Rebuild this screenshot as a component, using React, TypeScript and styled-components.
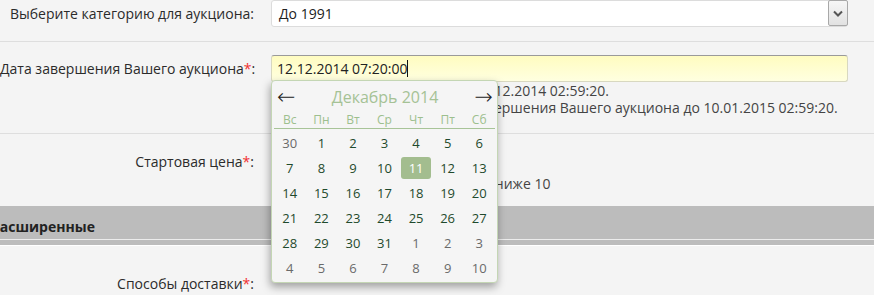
import styled, { createGlobalStyle } from "styled-components";

const GlobalStyle = createGlobalStyle`
  html, body {
    margin: 0;
    padding: 0;
    background: #f4f4f4;
    overflow: hidden;
  }
  body {
    font-family: "Open Sans", "Noto Sans", sans-serif;
    font-size: 14px;
    color: #2b2b2b;
  }
`;

const weekDays = ["Вс", "Пн", "Вт", "Ср", "Чт", "Пт", "Сб"];

const days = [
  [30, 1, 2, 3, 4, 5, 6],
  [7, 8, 9, 10, 11, 12, 13],
  [14, 15, 16, 17, 18, 19, 20],
  [21, 22, 23, 24, 25, 26, 27],
  [28, 29, 30, 31, 1, 2, 3],
  [4, 5, 6, 7, 8, 9, 10],
];

const isOther = (row: number, d: number) =>
  (row === 0 && d > 20) || (row >= 4 && d < 15);

const App = () => {
  return (
    <Page>
      <GlobalStyle />
      <Row $pad={0} $height={42}>
        <Label>Выберите категорию для аукциона:</Label>
        <Field>
          <Select>
            <span>До 1991</span>
            <SelectButton>
              <svg width="10" height="7" viewBox="0 0 10 7">
                <path d="M1 1.5 L5 5.5 L9 1.5" fill="none" stroke="#555" strokeWidth="2" />
              </svg>
            </SelectButton>
          </Select>
        </Field>
      </Row>

      <Row $pad={13} $height={92}>
        <Label>
          Дата завершения Вашего аукциона<Req>*</Req>:
        </Label>
        <Field>
          <TextInput $focused>
            12.12.2014 07:20:00<Caret />
          </TextInput>
          <Hint>Минимальная дата аукциона 13.12.2014 02:59:20.</Hint>
          <Hint>Вы сможете продлить время завершения Вашего аукциона до 10.01.2015 02:59:20.</Hint>
          <Calendar>
            <CalHeader>
              <Arrow>←</Arrow>
              <MonthTitle>Декабрь 2014</MonthTitle>
              <Arrow>→</Arrow>
            </CalHeader>
            <WeekRow>
              {weekDays.map((w) => (
                <WeekDay key={w}>{w}</WeekDay>
              ))}
            </WeekRow>
            <DaysGrid>
              {days.map((row, ri) =>
                row.map((d, ci) => (
                  <Day
                    key={ri + "-" + ci}
                    $other={isOther(ri, d)}
                    $selected={ri === 1 && d === 11}
                  >
                    {d}
                  </Day>
                ))
              )}
            </DaysGrid>
          </Calendar>
        </Field>
      </Row>

      <Row $pad={14} $height={72} $last>
        <Label>
          Стартовая цена<Req>*</Req>:
        </Label>
        <Field>
          <TextInput $width={120}>10</TextInput>
          <Hint>Стартовая цена должна быть не ниже 10</Hint>
        </Field>
      </Row>

      <SectionBar>
        <span>Расширенные</span>
      </SectionBar>

      <Row $pad={24} $height={60} $last>
        <Label>
          Способы доставки<Req>*</Req>:
        </Label>
        <Field />
      </Row>
    </Page>
  );
};

const Page = styled.div`
  width: 874px;
  height: 295px;
  position: relative;
  overflow: hidden;
`;

const Row = styled.div<{ $pad: number; $height: number; $last?: boolean }>`
  display: grid;
  grid-template-columns: 271px 577px;
  align-items: start;
  box-sizing: border-box;
  height: ${({ $height }) => $height}px;
  padding-top: ${({ $pad }) => $pad}px;
  border-bottom: ${({ $last }) => ($last ? "none" : "1px solid #dedede")};
`;

const Label = styled.div`
  text-align: right;
  padding-right: 17px;
  line-height: 27px;
  white-space: nowrap;
  color: #2b2b2b;
`;

const Req = styled.span`
  color: #f03030;
`;

const Field = styled.div`
  position: relative;
  white-space: nowrap;
`;

const Select = styled.div`
  height: 27px;
  box-sizing: border-box;
  border: 1px solid #dcdcdc;
  border-radius: 3px;
  background: #fff;
  display: flex;
  align-items: center;
  justify-content: space-between;
  padding-left: 7px;
  color: #222;
`;

const SelectButton = styled.div`
  width: 20px;
  height: 26px;
  box-sizing: border-box;
  border: 1px solid #a8a8a8;
  border-radius: 2px;
  margin-right: -1px;
  margin-top: -1px;
  background: linear-gradient(#f6f6f6, #e2e2e2);
  display: flex;
  align-items: center;
  justify-content: center;
`;

const TextInput = styled.div<{ $focused?: boolean; $width?: number }>`
  width: ${({ $width }) => ($width ? `${$width}px` : "auto")};
  height: 27px;
  box-sizing: border-box;
  border: 1px solid #d8d8c0;
  border-top-color: #9a9a9a;
  border-radius: 3px;
  background: ${({ $focused }) =>
    $focused ? "linear-gradient(#fffcc0, #ffffe0)" : "#fff"};
  padding-left: 5px;
  color: #222;
  display: flex;
  align-items: center;
`;

const Caret = styled.span`
  display: inline-block;
  width: 1px;
  height: 17px;
  background: #111;
`;

const Hint = styled.div`
  line-height: 17px;
  color: #444;
  &:first-of-type {
    margin-top: 1px;
  }
`;

const Calendar = styled.div`
  position: absolute;
  left: 0;
  top: 25px;
  width: 227px;
  height: 203px;
  box-sizing: border-box;
  background: #f5f5f5;
  border: 1px solid #c4d6b4;
  border-radius: 4px;
  box-shadow: -1px 4px 8px rgba(0, 0, 0, 0.35);
  padding: 0 2px;
  z-index: 5;
`;

const CalHeader = styled.div`
  display: flex;
  justify-content: space-between;
  align-items: center;
  height: 32px;
  padding: 0 2px 0 3px;
`;

const Arrow = styled.span`
  font-family: "DejaVu Sans", sans-serif;
  font-size: 22px;
  font-weight: 300;
  color: #222;
  line-height: 1;
`;

const MonthTitle = styled.span`
  font-size: 16px;
  color: #a5c295;
`;

const WeekRow = styled.div`
  display: grid;
  grid-template-columns: repeat(7, 1fr);
  height: 15px;
  border-bottom: 1px solid #a8c498;
`;

const WeekDay = styled.div`
  text-align: center;
  font-size: 12px;
  line-height: 14px;
  color: #9dbf8e;
`;

const DaysGrid = styled.div`
  display: grid;
  grid-template-columns: repeat(7, 1fr);
  grid-auto-rows: 25px;
  padding-top: 1px;
`;

const Day = styled.div<{ $other?: boolean; $selected?: boolean }>`
  justify-self: center;
  align-self: center;
  width: 30px;
  height: 22px;
  line-height: 22px;
  text-align: center;
  font-size: 13px;
  border-radius: 3px;
  color: ${({ $other, $selected }) =>
    $selected ? "#fff" : $other ? "#6a6a6a" : "#1f4a2c"};
  background: ${({ $selected }) => ($selected ? "#a3bd8f" : "transparent")};
`;

const SectionBar = styled.div`
  height: 40px;
  box-sizing: border-box;
  padding-top: 2px;
  background: linear-gradient(#bcbcbc 0 33px, #ececec 33px 34px, #bcbcbc 34px);
  border-bottom: 1px solid #fff;
  display: flex;
  align-items: center;
  span {
    font-weight: bold;
    color: #222;
    margin-left: -9px;
  }
`;

export default App;
